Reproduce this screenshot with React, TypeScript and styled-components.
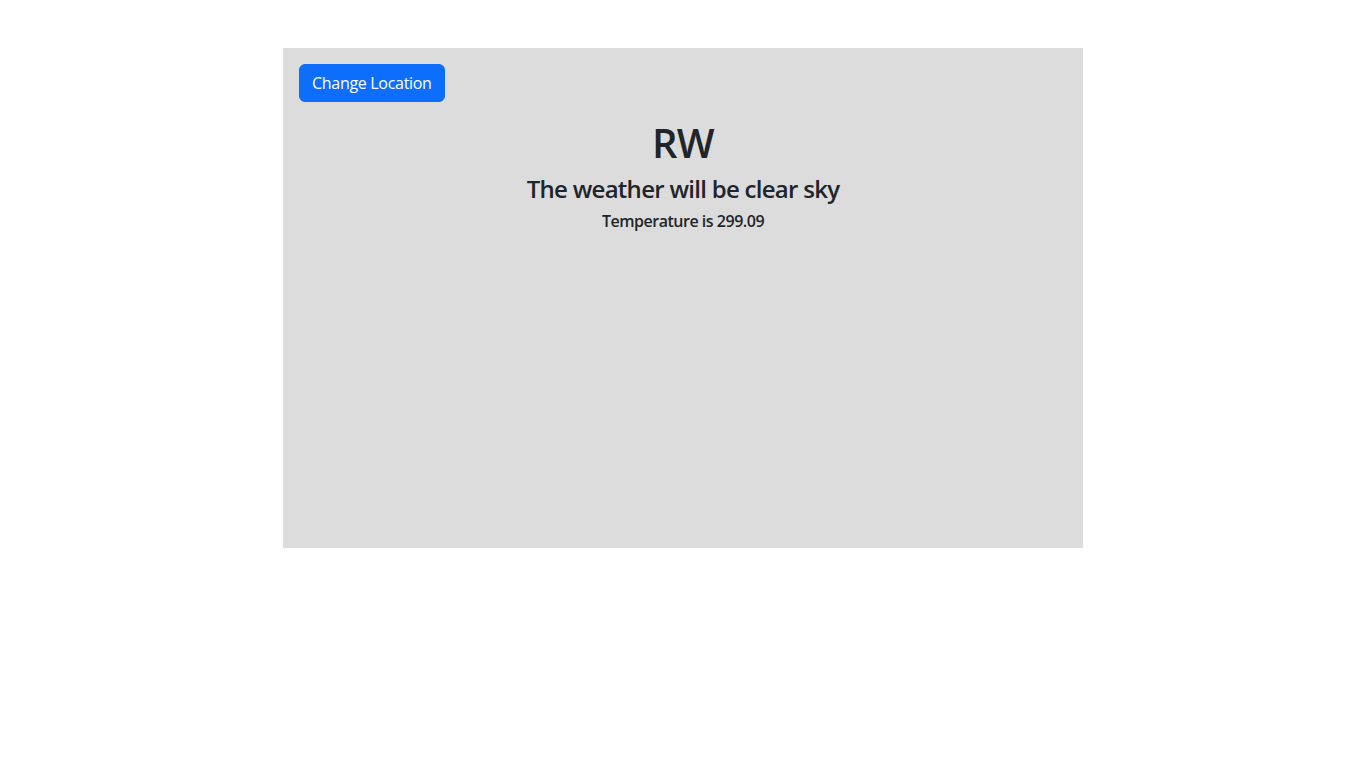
import React from 'react';
import styled, { createGlobalStyle } from 'styled-components';

const GlobalStyle = createGlobalStyle`
  *, *::before, *::after { box-sizing: border-box; }
  body {
    margin: 0;
    background: #fff;
    color: #212529;
    font-family: "Open Sans", "Noto Sans", "Liberation Sans", sans-serif;
    font-size: 16px;
    line-height: 1.5;
  }
`;

const Page = styled.div`
  display: flex;
  justify-content: center;
  padding-top: 48px;
`;

const Panel = styled.div`
  width: 800px;
  height: 500px;
  background: #dcdcdc;
  padding: 16px;
  display: flex;
  flex-direction: column;
`;

const Toolbar = styled.div`
  display: flex;
  margin-bottom: 17px;
`;

const Button = styled.button`
  font-family: inherit;
  font-size: 16px;
  line-height: 24px;
  padding: 6px 12px;
  color: #fff;
  background: #0d6efd;
  border: 1px solid #0d6efd;
  border-radius: 6px;
  cursor: pointer;
  letter-spacing: -0.3px;
`;

const Heading = styled.div<{ $size: number; $spacing: number }>`
  margin: 0 0 8px;
  text-align: center;
  font-size: ${p => p.$size}px;
  font-weight: 600;
  line-height: 1.2;
  color: #212529;
  letter-spacing: ${p => p.$spacing}em;
`;

export default function App() {
  const weather = { name: 'RW', description: 'clear sky', temp: 299.09 };
  return (
    <>
      <GlobalStyle />
      <Page>
        <Panel>
          <Toolbar>
            <Button>Change Location</Button>
          </Toolbar>
          <Heading as="h1" $size={40} $spacing={-0.02}>{weather.name}</Heading>
          <Heading as="h4" $size={24} $spacing={-0.03}>The weather will be {weather.description}</Heading>
          <Heading as="h6" $size={16} $spacing={-0.03}>Temperature is {weather.temp}</Heading>
        </Panel>
      </Page>
    </>
  );
}
